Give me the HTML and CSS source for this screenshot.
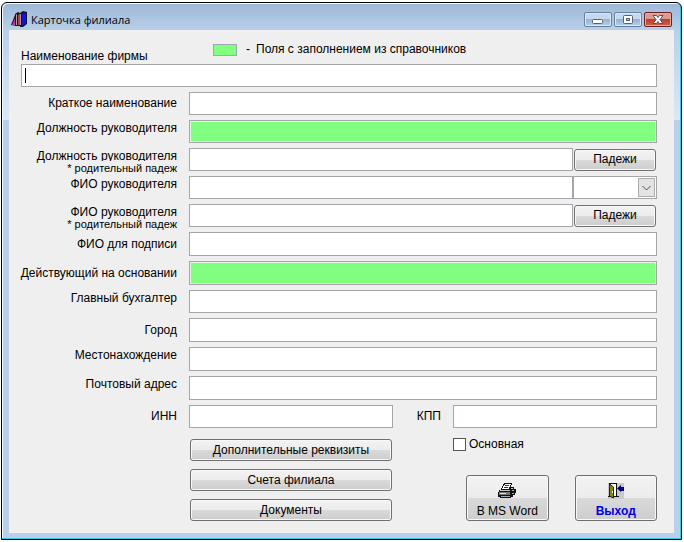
FILE: index.html
```html
<!DOCTYPE html>
<html lang="ru">
<head>
<meta charset="utf-8">
<title>Карточка филиала</title>
<link rel="stylesheet" href="styles.css">
</head>
<body>
<main class="window">
  <header class="titlebar">
    <svg class="app-icon" width="16" height="16" viewBox="0 0 16 16" aria-hidden="true">
      <path d="M0 14L4 4l2 1v10z" fill="#101010"/>
      <path d="M1 14L4 7v7z" fill="#b838a8"/>
      <path d="M4 3l3-2 2 1v13H4z" fill="#151515"/>
      <path d="M5 4l1-1v11H5z" fill="#b9a0a0"/>
      <path d="M7 4l3-2v12H7z" fill="#a04848"/>
      <path d="M9 2l3-2 4 1v12l-4 3H9z" fill="#101030"/>
      <path d="M11 3l4-1v10l-4 3z" fill="#1414d8"/>
      <path d="M9 3h1v11H9z" fill="#c09090"/>
    </svg>
    <h1 class="title">Карточка филиала</h1>
    <div class="controls">
      <button class="control" type="button" aria-label="Свернуть">
        <svg width="26" height="13" viewBox="0 0 26 13"><rect x="7.500" y="6.500" width="10" height="4" rx="1" fill="#fff" stroke="#53637a"/></svg>
      </button>
      <button class="control" type="button" aria-label="Развернуть">
        <svg width="26" height="13" viewBox="0 0 26 13"><rect x="8.500" y="2.500" width="9" height="8" rx="1" fill="#fff" stroke="#53637a"/><rect x="11.500" y="5.500" width="3" height="2" fill="#a8bfd8" stroke="#53637a"/></svg>
      </button>
      <button class="control close" type="button" aria-label="Закрыть">
        <svg width="26" height="13" viewBox="0 0 26 13"><path d="M8 2.500h3.500L13 4.500l1.500-2H18l-3 4 3 4h-3.500L13 8.500l-1.500 2H8l3-4z" fill="#fff" stroke="#5d4a5c"/></svg>
      </button>
    </div>
  </header>

  <form class="card">
    <div class="intro">
      <label class="intro-label" for="firm">Наименование фирмы</label>
      <p class="legend"><span class="swatch"></span><span class="dash">-</span>Поля с заполнением из справочников</p>
    </div>
    <div class="firm">
      <input class="field" id="firm" type="text">
      <span class="caret"></span>
    </div>

    <div class="rows">
      <label class="label" for="short">Краткое наименование</label>
      <input class="field" id="short" type="text">

      <label class="label raised" for="post">Должность руководителя</label>
      <input class="field lookup" id="post" type="text">

      <label class="label raised stacked" for="post-gen"><span class="main">Должность руководителя</span><span class="note cover">* родительный падеж</span></label>
      <div class="with-side">
        <input class="field" id="post-gen" type="text">
        <button class="button case" type="button">Падежи</button>
      </div>

      <label class="label raised" for="head">ФИО руководителя</label>
      <div class="with-side joined">
        <input class="field" id="head" type="text">
        <div class="combo">
          <select class="field" aria-label="Пол руководителя"><option></option></select>
          <svg class="arrow" width="17" height="19" viewBox="0 0 17 19" aria-hidden="true"><rect x="0.500" y="0.500" width="16" height="18" fill="#e3e3e3" stroke="#adadad"/><path d="M4.500 8l4 4 4-4" fill="none" stroke="#505050"/></svg>
        </div>
      </div>

      <label class="label raised stacked" for="head-gen"><span class="main cover">ФИО руководителя</span><span class="note">* родительный падеж</span></label>
      <div class="with-side">
        <input class="field" id="head-gen" type="text">
        <button class="button case" type="button">Падежи</button>
      </div>

      <label class="label" for="sign">ФИО для подписи</label>
      <input class="field tall" id="sign" type="text">

      <label class="label" for="basis">Действующий на основании</label>
      <input class="field tall lookup" id="basis" type="text">

      <label class="label raised" for="accountant">Главный бухгалтер</label>
      <input class="field" id="accountant" type="text">

      <label class="label" for="city">Город</label>
      <input class="field tall" id="city" type="text">

      <label class="label raised" for="place">Местонахождение</label>
      <input class="field tall" id="place" type="text">

      <label class="label raised" for="mail">Почтовый адрес</label>
      <input class="field tall" id="mail" type="text">

      <label class="label" for="inn">ИНН</label>
      <div class="codes">
        <input class="field" id="inn" type="text">
        <label class="label kpp" for="kpp">КПП</label>
        <input class="field" id="kpp" type="text">
      </div>
    </div>

    <div class="footer">
      <div class="links">
        <button class="button" type="button">Дополнительные реквизиты</button>
        <button class="button" type="button">Счета филиала</button>
        <button class="button" type="button">Документы</button>
      </div>
      <div class="side">
        <label class="check"><input class="box" type="checkbox">Основная</label>
        <div class="actions">
          <button class="button big" type="button">
            <svg width="18" height="16" viewBox="0 0 18 16" aria-hidden="true">
              <path d="M6 0h8v2h-1v2h3v2h2v4h-1v2h-2v2h-2v1H2v-1H0V9h1V7h2V5h1V3h1V1h1z" fill="#111"/>
              <path d="M7 1h6v1h-1v2h-1v2H4V5h1V3h1V2h1z" fill="#fff"/>
              <path d="M7 2h4v1H7zM6 4h4v1H6z" fill="#333"/>
              <path d="M3 7h9v1H2V7zM13 5h2v1h-2z" fill="#c8c8c8"/>
              <path d="M1 9h11v3H1z" fill="#777"/>
              <path d="M2 10h6v1H2z" fill="#ddd"/>
              <path d="M3 13h9v1H3zM14 7h2v1h-2zM14 10h2v1h-2z" fill="#aaa"/>
            </svg>
            <span>В MS Word</span>
          </button>
          <button class="button big exit" type="button">
            <svg width="16" height="16" viewBox="0 0 16 16" aria-hidden="true">
              <path d="M0 0h16v16H0z" fill="#c9c9cd"/>
              <path d="M1 0h8v13h2v1H0v-1h1z" fill="#111"/>
              <path d="M3 1h5v12H3z" fill="#fff"/>
              <path d="M1.500 1l4 3v11l-4-2z" fill="#858518" stroke="#222"/>
              <path d="M4 8h1v2H4z" fill="#eee"/>
              <path d="M9 5.500L13 2v2h3v4h-3v1z" fill="#00007c"/>
            </svg>
            <span>Выход</span>
          </button>
        </div>
      </div>
    </div>
  </form>
</main>
</body>
</html>
```
FILE: styles.css
```css
* {
  box-sizing: border-box;
}

body {
  margin: 2px 2px 1px 1px;
  background: #fff;
  color: #000;
  font: 12px/15px "Liberation Sans", Arial, sans-serif;
}

.window {
  padding: 0 7px 6px 7px;
  border: 1px solid #000;
  border-radius: 6px 6px 0 0;
  background: linear-gradient(#9db8d6 0, #b9d0ea 28px, #dce8f6 117px, #bad0ea 117px);
  box-shadow: inset -1px -1px #35c8e8, inset 1px 1px #f4f9ff;
}

.titlebar {
  display: flex;
  align-items: center;
  height: 27px;
  padding: 0 2px;
}

.title {
  flex: 1;
  margin: 6px 0 0 4px;
  font: 11px/16px "Open Sans", "Noto Sans", sans-serif;
}

.app-icon {
  margin-top: 5px;
}

.controls {
  display: flex;
  gap: 2px;
  margin-top: 6px;
}

.control {
  width: 28px;
  height: 15px;
  padding: 0;
  border: 1px solid #6880a0;
  border-radius: 2px;
  background: linear-gradient(#c5d8ed 45%, #94b2d4 50%, #b5d0ea);
  box-shadow: inset 0 0 0 1px #dbe8f5;
}

.control svg {
  display: block;
}

.close {
  border-color: #6b1f25;
  background: linear-gradient(#dc9a8e 45%, #bd3e2c 50%, #d0604a);
  box-shadow: inset 0 0 0 1px #e5aba0;
}

.card {
  padding: 0 17px 12px 12px;
  background: #efefef;
}

.intro {
  display: grid;
  grid-template-columns: 192px 1fr;
  height: 34px;
}

.intro-label {
  align-self: end;
}

.legend {
  display: flex;
  align-items: center;
  align-self: start;
  margin: 12px 0 0;
  white-space: pre;
}

.swatch {
  width: 24px;
  height: 12px;
  margin-right: 9px;
  border: 1px solid #a0a8b8;
  background: #80ff80;
}

.dash {
  margin-right: 6px;
}

.firm {
  position: relative;
  display: flex;
  margin-bottom: 5px;
}

.caret {
  position: absolute;
  top: 4px;
  left: 4px;
  width: 1px;
  height: 15px;
  background: #000;
}

.field {
  display: block;
  flex: 1;
  width: 100%;
  min-width: 0;
  height: 23px;
  margin: 0;
  padding: 0 4px;
  border: 1px solid #a5a5aa;
  border-radius: 0;
  background: #fff;
  font: inherit;
  outline: 0;
  appearance: none;
}

.tall {
  height: 24px;
}

.lookup {
  background: #80ff80;
  box-shadow: inset 0 0 0 1px #e4f7e4;
}

.rows {
  display: grid;
  grid-template-columns: 156px 1fr;
  gap: 5px 12px;
}

.label {
  align-self: center;
  justify-self: end;
  white-space: nowrap;
}

.raised {
  align-self: start;
  padding-top: 1px;
}

.stacked {
  display: flex;
  flex-direction: column;
  align-items: flex-end;
  height: 23px;
}

.note {
  margin-top: -3px;
  font-size: 11px;
  line-height: 14px;
}

.cover {
  position: relative;
  background: #efefef;
}

.with-side {
  display: grid;
  grid-template-columns: 1fr 82px;
  align-items: center;
  gap: 1px;
  padding-right: 1px;
}

.joined {
  grid-template-columns: 1fr 84px;
  gap: 0;
  padding-right: 0;
}

.combo {
  position: relative;
}

.arrow {
  position: absolute;
  top: 2px;
  right: 2px;
  pointer-events: none;
}

.codes {
  display: grid;
  grid-template-columns: 1fr 60px 1fr;
}

.kpp {
  padding-right: 12px;
}

.button {
  height: 22px;
  padding: 0;
  border: 1px solid #707070;
  border-radius: 3px;
  background: linear-gradient(#f3f3f3, #ebebeb 50%, #dadada 50%, #cdcdcd);
  box-shadow: inset 0 0 0 1px #f8f8f8;
  color: #000;
  font: inherit;
}

.footer {
  display: grid;
  grid-template-columns: 1fr 1fr;
  column-gap: 60px;
  margin: 9px 0 0 168px;
}

.links {
  display: grid;
  gap: 8px;
  padding: 2px 1px 0;
}

.check {
  display: flex;
  align-items: center;
  gap: 3px;
}

.box {
  width: 13px;
  height: 13px;
  margin: 0;
  border: 1px solid #555;
  background: #fff;
  appearance: none;
}

.actions {
  display: grid;
  grid-template-columns: 1fr 1fr;
  gap: 26px;
  margin: 23px 0 0 13px;
}

.big {
  display: flex;
  flex-direction: column;
  align-items: center;
  justify-content: flex-end;
  gap: 5px;
  height: 46px;
  padding-bottom: 1px;
}

.exit {
  color: #0000e0;
  font-weight: bold;
}
```
